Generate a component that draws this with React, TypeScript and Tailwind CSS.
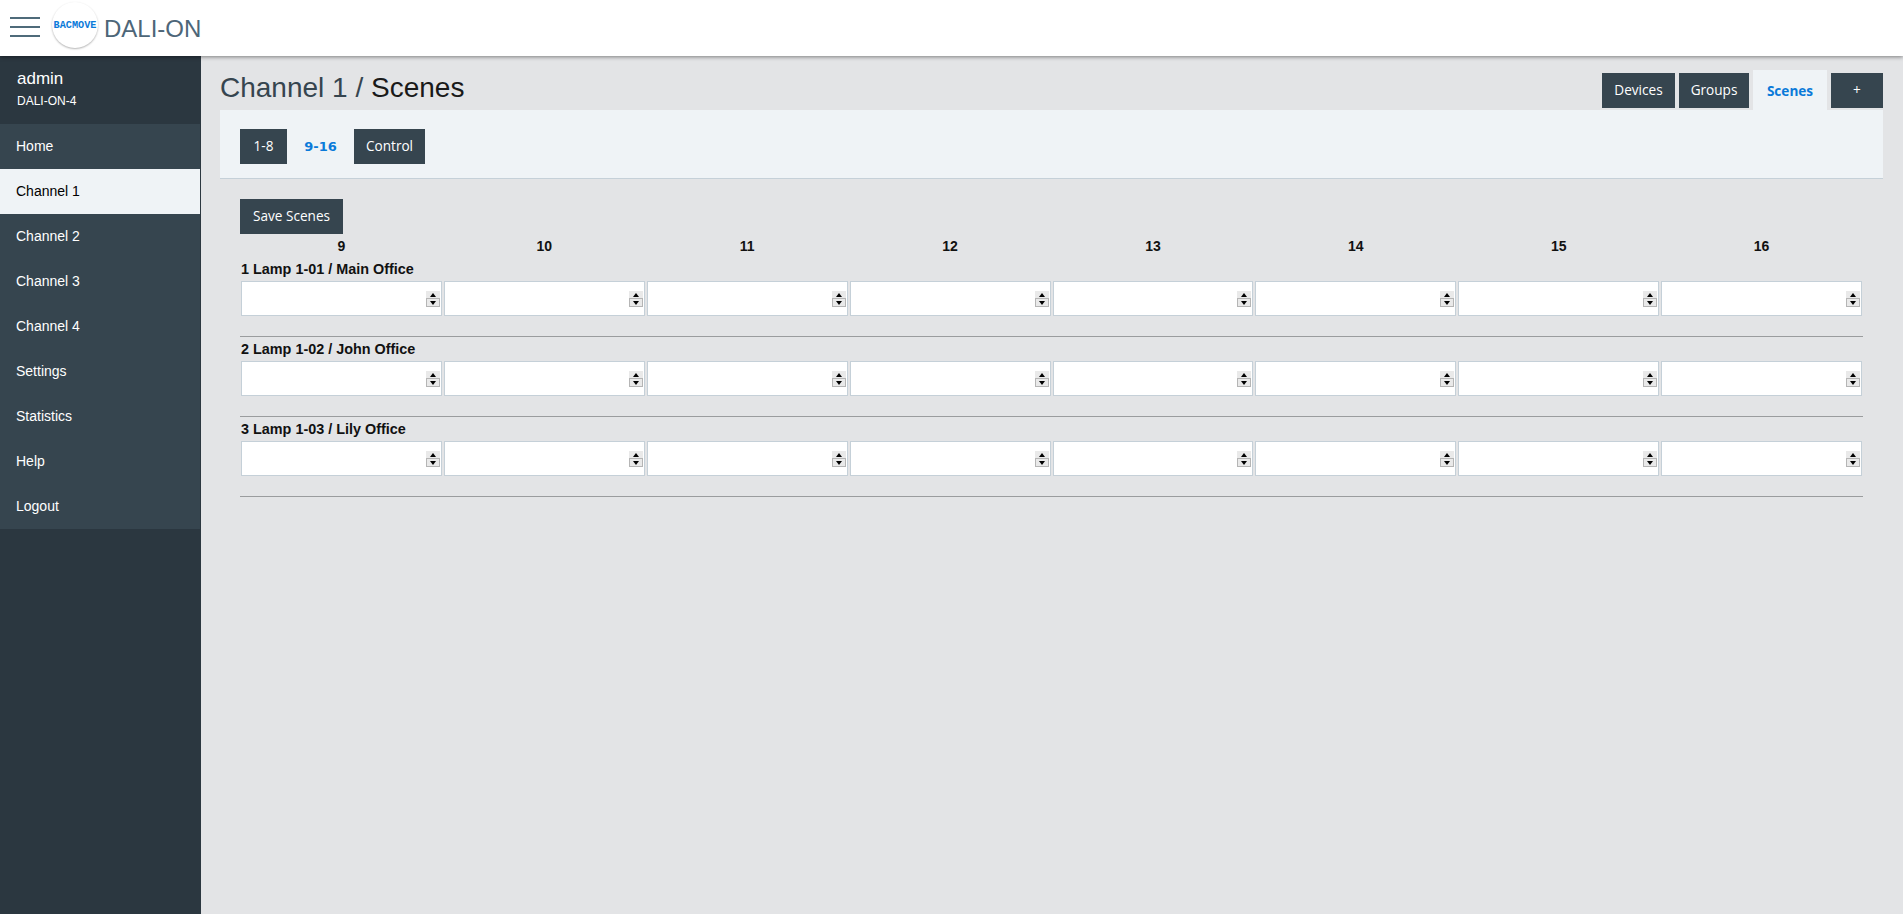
const NAV = ["Home", "Channel 1", "Channel 2", "Channel 3", "Channel 4", "Settings", "Statistics", "Help", "Logout"];
const COLS = [9, 10, 11, 12, 13, 14, 15, 16];
const LAMPS = ["1 Lamp 1-01 / Main Office", "2 Lamp 1-02 / John Office", "3 Lamp 1-03 / Lily Office"];

const btn = "flex h-[35px] items-center justify-center bg-[#36454f] text-[13.6px] text-white font-['Open_Sans',sans-serif]";

function Spinner() {
  return (
    <span className="absolute right-[2px] top-[10px] flex h-[16px] w-[14px] flex-col gap-px bg-[#b5b5b5]">
      <span className="flex flex-1 items-center justify-center bg-[#e9e9e9]">
        <span className="h-0 w-0 border-x-[3.5px] border-b-[4px] border-x-transparent border-b-black" />
      </span>
      <span className="flex flex-1 items-center justify-center border-x border-b border-[#b5b5b5] bg-[#e9e9e9]">
        <span className="h-0 w-0 border-x-[3.5px] border-t-[4px] border-x-transparent border-t-black" />
      </span>
    </span>
  );
}

function SceneInput() {
  return (
    <div className="relative h-[35px]">
      <input
        type="number"
        className="h-full w-full border border-[#c5d0d8] bg-white px-2 text-sm outline-none [appearance:textfield]"
      />
      <Spinner />
    </div>
  );
}

export default function App() {
  return (
    <div className="flex min-h-[914px] flex-col bg-[#e3e4e6] font-['Liberation_Sans',sans-serif]">
      <header className="relative z-10 flex h-[56px] items-center bg-white pl-[10px] shadow-[0_1px_4px_rgba(0,0,0,0.45)]">
        <button className="mb-[2px] flex h-[20px] w-[30px] flex-col justify-between">
          <span className="h-[2px] w-full bg-[#4f6b7a]" />
          <span className="h-[2px] w-full bg-[#4f6b7a]" />
          <span className="h-[2px] w-full bg-[#4f6b7a]" />
        </button>
        <div className="mb-[6px] ml-[12px] flex h-[46px] w-[46px] items-center justify-center rounded-full bg-white pt-px shadow-[0_1px_2px_rgba(0,0,0,0.3)]">
          <span className="font-['Liberation_Mono',monospace] text-[10.2px] font-bold text-[#0a7ad9]">BACMOVE</span>
        </div>
        <span className="ml-[6px] mt-[1px] text-[24px] text-[#4d6678]">DALI-ON</span>
      </header>

      <div className="flex flex-1">
        <aside className="w-[201px] shrink-0 border-r border-[#2b3740] bg-[#2b3740]">
          <div className="h-[68px] pl-[17px] pt-[13px] text-white">
            <div className="text-[17px] leading-[20px]">admin</div>
            <div className="mt-[4px] text-[12px] leading-[16px]">DALI-ON-4</div>
          </div>
          <nav className="bg-[#36454f]">
            {NAV.map((n) => (
              <div
                key={n}
                className={
                  n === "Channel 1"
                    ? "flex h-[45px] items-center bg-[#eff3f6] pb-[2px] pl-[16px] text-sm text-black"
                    : "flex h-[45px] items-center pb-[2px] pl-[16px] text-sm text-white"
                }
              >
                {n}
              </div>
            ))}
          </nav>
        </aside>

        <main className="min-w-0 flex-1 pl-[19px] pr-[20px]">
          <div className="flex h-[54px] items-end justify-between">
            <h1 className="self-start pt-[16px] text-[28px] leading-[32px] text-[#1a1a1a]">
              <span className="text-[#36454f]">Channel 1 /</span> Scenes
            </h1>
            <div className="flex items-end gap-[4px]">
              <div className={`${btn} mb-[2px] w-[73px]`}>Devices</div>
              <div className={`${btn} mb-[2px] w-[70px]`}>Groups</div>
              <div className="flex h-[40px] w-[74px] items-center justify-center bg-[#eff3f6] pt-[2px] font-['Open_Sans',sans-serif] text-[13.6px] font-bold text-[#0a7ad9]">
                Scenes
              </div>
              <div className={`${btn} mb-[2px] w-[52px]`}>+</div>
            </div>
          </div>

          <div className="flex h-[69px] items-start gap-[4px] border-b border-[#c5d0d8] bg-[#eff3f6] pl-[20px] pt-[19px]">
            <div className={`${btn} w-[47px]`}>1-8</div>
            <div className="flex h-[35px] w-[59px] items-center justify-center font-['DejaVu_Sans',sans-serif] text-[13px] font-bold text-[#0a7ad9]">
              9-16
            </div>
            <div className={`${btn} w-[71px]`}>Control</div>
          </div>

          <div className="pl-[20px] pr-[20px] pt-[20px]">
            <div className={`${btn} w-[103px]`}>Save Scenes</div>
            <div className="mb-px grid grid-cols-8 gap-x-[2px] px-px">
              {COLS.map((c) => (
                <div key={c} className="pt-[2px] text-center text-sm font-bold leading-[20px] text-[#111]">
                  {c}
                </div>
              ))}
            </div>
            {LAMPS.map((l) => (
              <section key={l} className="h-[80px] border-b border-[#9a9c9e]">
                <div className="pl-px pt-[4px] text-[14.4px] font-bold leading-[16px] text-[#111]">{l}</div>
                <div className="mt-[4px] grid grid-cols-8 gap-x-[2px] px-px">
                  {COLS.map((c) => (
                    <SceneInput key={c} />
                  ))}
                </div>
              </section>
            ))}
          </div>
        </main>
      </div>
    </div>
  );
}
